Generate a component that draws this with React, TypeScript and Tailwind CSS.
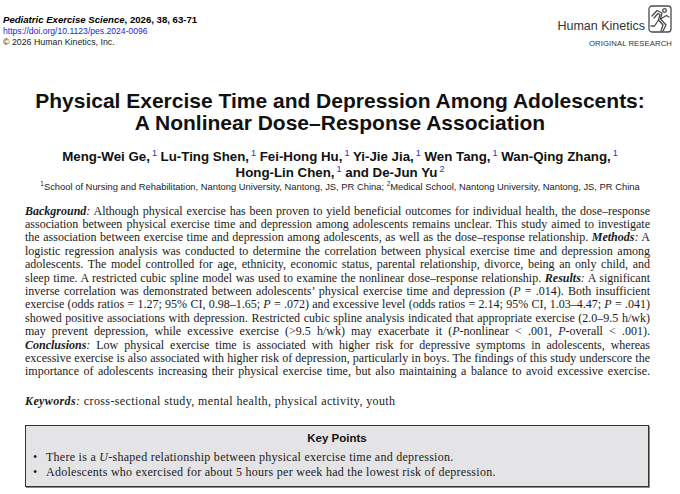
import React from 'react';

const serif = { fontFamily: '"Liberation Serif", "Times New Roman", serif' };

function HKLogo() {
    return (
        <svg width="24" height="28" viewBox="0 0 24 28" fill="none" stroke="#4a4a4a" strokeWidth="1.3" strokeLinejoin="round" strokeLinecap="round">
            <rect x="1" y="1" width="22" height="26" rx="3" />
            <circle cx="16.5" cy="5.5" r="1.8" />
            <path d="M4 11 L9 5.5 L14 8 L12.5 14 L18 20 L15 26" />
            <path d="M6 13 L10 8.5 L12 9.5 L10.5 15 L15 20 L13 26" />
            <path d="M10.5 15 L6.5 21 L3 21" />
            <path d="M12.5 14 L18.5 10.5 L21 12" />
        </svg>
    );
}

const Sup = ({ n }: { n: string }) => (
    <sup className="text-[#2b2bd6] font-normal text-[9px] !-top-[5px] ml-[2px]">{n}</sup>
);

const Line = ({ children, last }: { children: React.ReactNode; last?: boolean }) => (
    <div className={last ? 'text-left whitespace-nowrap' : 'text-justify [text-align-last:justify] whitespace-nowrap'}>{children}</div>
);

export default function App() {
    return (
        <div className="bg-white text-black w-[680px] h-[494px] overflow-hidden" style={{ fontFamily: '"Liberation Sans", Arial, sans-serif' }}>
            {/* Header */}
            <div className="flex justify-between items-start pl-[3px] pr-[8px]">
                <div className="pt-[14px] text-[9.6px] leading-[11.5px]">
                    <div className="font-bold"><i>Pediatric Exercise Science</i>, 2026, 38, 63-71</div>
                    <div className="text-[#2424d9] text-[8.6px]">https://doi.org/10.1123/pes.2024-0096</div>
                    <div className="text-[#222] text-[8.8px]">© 2026 Human Kinetics, Inc.</div>
                </div>
                <div className="flex flex-col items-end pt-[5px]">
                    <div className="flex items-end gap-[3px]">
                        <span className="text-[12.5px] text-[#333] leading-none mb-[1px]">Human Kinetics</span>
                        <HKLogo />
                    </div>
                    <div className="text-[7.7px] text-[#333] mt-[5px] tracking-[0.1px]">ORIGINAL RESEARCH</div>
                </div>
            </div>

            {/* Title */}
            <h1 className="mt-[40px] text-center font-bold text-[21px] leading-[22px] text-[#111]">
                Physical Exercise Time and Depression Among Adolescents:<br />
                A Nonlinear Dose–Response Association
            </h1>

            {/* Authors */}
            <div className="mt-[15px] text-center font-bold text-[13.3px] leading-[16px] text-[#111]">
                Meng-Wei Ge,<Sup n="1" /> Lu-Ting Shen,<Sup n="1" /> Fei-Hong Hu,<Sup n="1" /> Yi-Jie Jia,<Sup n="1" /> Wen Tang,<Sup n="1" /> Wan-Qing Zhang,<Sup n="1" /><br />
                Hong-Lin Chen,<Sup n="1" /> and De-Jun Yu<Sup n="2" />
            </div>
            <div className="text-center text-[9.4px] leading-[11px] text-[#222]">
                <sup className="text-[6.5px]">1</sup>School of Nursing and Rehabilitation, Nantong University, Nantong, JS, PR China; <sup className="text-[6.5px]">2</sup>Medical School, Nantong University, Nantong, JS, PR China
            </div>

            {/* Abstract */}
            <div className="mx-[25px] mt-[13px] w-[625px] text-[12px] leading-[13.4px] text-[#1a1a1a]" style={serif}>
                <Line><b><i>Background</i></b><i>:</i> Although physical exercise has been proven to yield beneficial outcomes for individual health, the dose–response</Line>
                <Line>association between physical exercise time and depression among adolescents remains unclear. This study aimed to investigate</Line>
                <Line>the association between exercise time and depression among adolescents, as well as the dose–response relationship. <b><i>Methods</i></b><i>:</i> A</Line>
                <Line>logistic regression analysis was conducted to determine the correlation between physical exercise time and depression among</Line>
                <Line>adolescents. The model controlled for age, ethnicity, economic status, parental relationship, divorce, being an only child, and</Line>
                <Line>sleep time. A restricted cubic spline model was used to examine the nonlinear dose–response relationship. <b><i>Results</i></b><i>:</i> A significant</Line>
                <Line>inverse correlation was demonstrated between adolescents’ physical exercise time and depression (<i>P</i> = .014). Both insufficient</Line>
                <Line>exercise (odds ratios = 1.27; 95% CI, 0.98–1.65; <i>P</i> = .072) and excessive level (odds ratios = 2.14; 95% CI, 1.03–4.47; <i>P</i> = .041)</Line>
                <Line>showed positive associations with depression. Restricted cubic spline analysis indicated that appropriate exercise (2.0–9.5 h/wk)</Line>
                <Line>may prevent depression, while excessive exercise (&gt;9.5 h/wk) may exacerbate it (<i>P</i>-nonlinear &lt; .001, <i>P</i>-overall &lt; .001).</Line>
                <Line><b><i>Conclusions</i></b><i>:</i> Low physical exercise time is associated with higher risk for depressive symptoms in adolescents, whereas</Line>
                <Line>excessive exercise is also associated with higher risk of depression, particularly in boys. The findings of this study underscore the</Line>
                <Line>importance of adolescents increasing their physical exercise time, but also maintaining a balance to avoid excessive exercise.</Line>
            </div>

            {/* Keywords */}
            <div className="mx-[25px] mt-[15px] text-[12px] leading-[14px] tracking-[0.38px] text-[#1a1a1a]" style={serif}>
                <b><i>Keywords</i></b><i>:</i> cross-sectional study, mental health, physical activity, youth
            </div>

            {/* Key Points */}
            <div className="mx-[25px] mt-[17px] w-[624px] bg-[#e4e4e6] border border-[#333] shadow-[1px_1px_0_#8a8a8a] pt-[5px] pb-[6px]">
                <div className="text-center font-bold text-[11.5px] leading-[15px] text-[#111]">Key Points</div>
                <ul className="mt-[4px] text-[12px] leading-[15px] tracking-[0.27px] text-[#1a1a1a]" style={serif}>
                    <li className="flex"><span className="w-[20px] pl-[7px]">•</span><span>There is a <i>U</i>-shaped relationship between physical exercise time and depression.</span></li>
                    <li className="flex"><span className="w-[20px] pl-[7px]">•</span><span>Adolescents who exercised for about 5 hours per week had the lowest risk of depression.</span></li>
                </ul>
            </div>
        </div>
    );
}
